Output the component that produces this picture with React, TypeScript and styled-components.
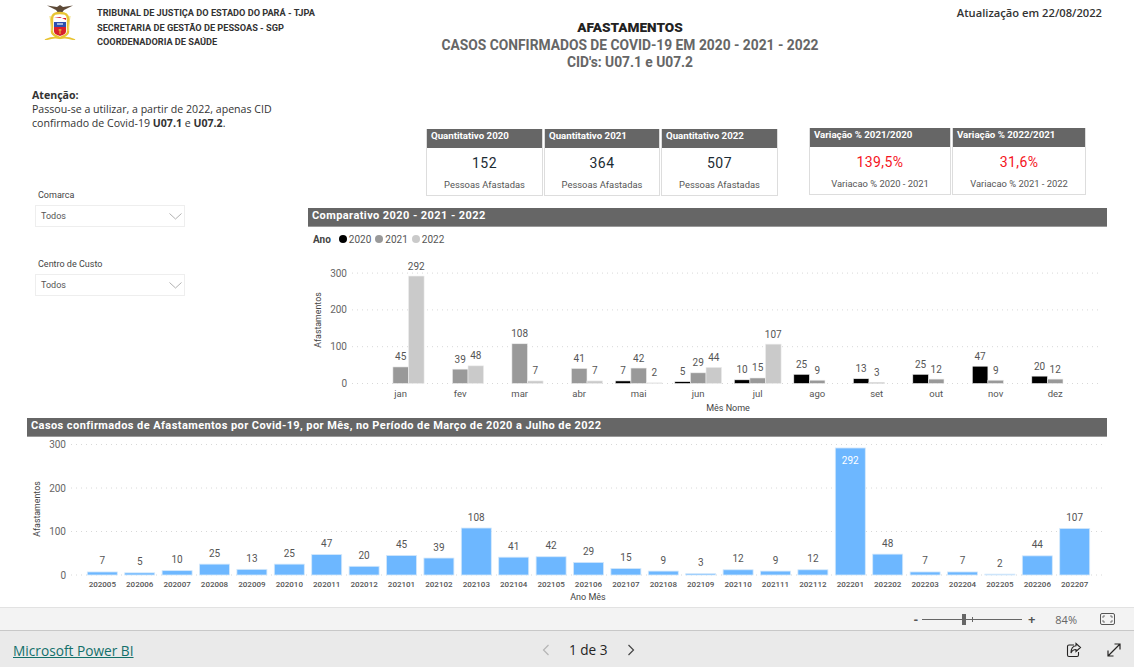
import React from 'react';
import styled, { createGlobalStyle } from 'styled-components';

const GlobalStyle = createGlobalStyle`
  html, body { margin: 0; padding: 0; background: #fff; }
  body { font-family: "Open Sans", "Liberation Sans", sans-serif; overflow: hidden; }
  * { box-sizing: border-box; }
`;

const Page = styled.div`
  width: 1134px;
  height: 667px;
  display: flex;
  flex-direction: column;
`;

const Report = styled.main`
  height: 607px;
  flex: none;
`;

const HeaderRow = styled.header`
  height: 80px;
  display: grid;
  grid-template-columns: 420px 420px 1fr;
`;

const OrgBlock = styled.div`
  display: flex;
  padding: 4px 0 0 44px;
  gap: 21px;
`;

const OrgLines = styled.div`
  padding-top: 2px;
  font: 700 9.2px/14.6px Roboto, "Liberation Sans", sans-serif;
  color: #333;
  white-space: nowrap;
`;

const Titles = styled.div`
  padding-top: 19px;
  text-align: center;
  font: 700 13.8px/17.5px Roboto, "Liberation Sans", sans-serif;
  color: #666;
  b { color: #222; font-size: 13.6px; }
`;

const Updated = styled.div`
  padding: 5px 32px 0 0;
  text-align: right;
  font: 600 11.2px/15px "Open Sans", sans-serif;
  color: #333;
`;

const MiddleRow = styled.section`
  height: 338px;
  display: flex;
`;

const LeftColumn = styled.div`
  width: 308px;
  flex: none;
`;

const Notice = styled.p`
  margin: 0;
  padding: 8px 0 0 32px;
  font: 400 10.6px/14px "Open Sans", sans-serif;
  color: #333;
  b { font-weight: 700; }
`;

const Filter = styled.div`
  margin: 0 0 0 35px;
  width: 150px;
  height: 69px;
  &:first-of-type { margin-top: 58px; }
`;

const FilterLabel = styled.div`
  padding-left: 3px;
  height: 17px;
  font: 400 9px/14px Roboto, "Liberation Sans", sans-serif;
  color: #444;
`;

const Dropdown = styled.div`
  height: 22px;
  border: 1px solid #eee;
  display: flex;
  align-items: center;
  justify-content: space-between;
  padding: 0 0 0 5px;
  font: 400 9px Roboto, "Liberation Sans", sans-serif;
  color: #555;
`;

const RightColumn = styled.div`
  width: 799px;
  flex: none;
`;

const KpiRow = styled.div`
  height: 128px;
  padding: 48px 0 0 118px;
  display: flex;
`;

const KpiGroup = styled.div<{ $shift?: number; $offset?: number }>`
  display: flex;
  gap: 1px;
  margin-left: ${p => p.$shift ?? 0}px;
  margin-top: ${p => p.$offset ?? 0}px;
`;

const Card = styled.div<{ $width: number }>`
  width: ${p => p.$width}px;
  height: 67px;
  border: 1px solid #ddd;
  border-top: none;
  text-align: center;
  background: #fff;
`;

const CardHeader = styled.div`
  height: 19px;
  background: #666;
  color: #fff;
  padding: 0 0 0 4px;
  text-align: left;
  font: 700 9.7px/14px Roboto, "Liberation Sans", sans-serif;
  white-space: nowrap;
`;

const CardValue = styled.div<{ $alert?: boolean }>`
  margin-top: 5px;
  font: 400 14px/20px Roboto, "Liberation Sans", sans-serif;
  letter-spacing: 0.4px;
  color: ${p => (p.$alert ? '#f5141e' : '#1c2b33')};
`;

const CardCaption = styled.div`
  margin-top: 5px;
  font: 400 9.4px/13px Roboto, "Liberation Sans", sans-serif;
  color: #555;
  white-space: nowrap;
`;

const SectionBar = styled.div`
  height: 19px;
  background: #666;
  border-bottom: 1px solid #999;
  color: #fff;
  padding-left: 4px;
  font: 700 11px/15px Roboto, "Liberation Sans", sans-serif;
  letter-spacing: 0.42px;
  white-space: nowrap;
`;

const Legend = styled.div`
  height: 16px;
  margin-top: 4px;
  padding-left: 5px;
  display: flex;
  align-items: center;
  font: 400 10px Roboto, "Liberation Sans", sans-serif;
  color: #555;
  b { color: #444; margin-right: 8px; }
`;

const LegendItem = styled.span<{ $color: string }>`
  display: inline-flex;
  align-items: center;
  margin-right: 4px;
  &::before {
    content: '';
    width: 8px;
    height: 8px;
    margin-right: 2px;
    border-radius: 50%;
    background: ${p => p.$color};
  }
`;

const ChartSvg = styled.svg`
  display: block;
  text {
    font-family: Roboto, "Liberation Sans", sans-serif;
  }
`;

const BottomSection = styled.section`
  margin-left: 27px;
  width: 1080px;
`;

const ZoomBar = styled.div`
  height: 24px;
  flex: none;
  background: #f3f3f3;
  border-top: 1px solid #e2e2e2;
  border-bottom: 1px solid #c8c8c8;
  display: flex;
  align-items: center;
  justify-content: flex-end;
  padding-right: 19px;
  color: #666;
`;

const ZoomSign = styled.span`
  font: 700 13px "Open Sans", sans-serif;
  color: #555;
`;

const ZoomTrack = styled.div`
  position: relative;
  width: 100px;
  height: 1px;
  margin: 0 6px 0 4px;
  background: #666;
`;

const ZoomThumb = styled.div`
  position: absolute;
  left: 40px;
  top: -5px;
  width: 4px;
  height: 11px;
  background: #666;
`;

const ZoomTick = styled.div`
  position: absolute;
  left: 50px;
  top: -2px;
  width: 1px;
  height: 5px;
  background: #666;
`;

const ZoomValue = styled.span`
  margin: 0 23px 0 20px;
  font: 400 11px "Open Sans", sans-serif;
  color: #666;
`;

const Footer = styled.footer`
  flex: 1;
  background: #eaeaea;
  display: grid;
  grid-template-columns: 528px auto 1fr;
  align-items: center;
  padding: 1px 12px 0 13px;
`;

const PowerBiLink = styled.a`
  font: 400 13.7px "Open Sans", sans-serif;
  color: #13706a;
  text-decoration: underline;
  cursor: pointer;
`;

const Pager = styled.nav`
  display: flex;
  align-items: center;
  gap: 18px;
  font: 400 13.6px "Open Sans", sans-serif;
  color: #252423;
`;

const FooterActions = styled.div`
  display: flex;
  justify-content: flex-end;
  gap: 24px;
`;

const logoColors = { gold: '#e8c432', red: '#d8202a', blue: '#2b4fb0', brown: '#5d4a37' };

const Crest = () => (
  <svg width="32" height="36" viewBox="0 0 32 36">
    <path d="M3 1.5 L13 3 L16 1 L19 3 L29 1.5 L20 6 L17 10 L15 10 L12 6 Z" fill={logoColors.brown} />
    <path d="M8 15 C8 9 13 9 16 9 C19 9 24 9 24 15 L24 28 C24 31 20 32 16 34 C12 32 8 31 8 28 Z" fill="none" stroke={logoColors.gold} strokeWidth="2.4" />
    <path d="M10 13 L22 13 L22 20 L10 20 Z" fill="#fff" />
    <path d="M10 14 L22 14 L22 16 L16 13 Z" fill={logoColors.red} />
    <rect x="10" y="18" width="12" height="5" fill={logoColors.blue} />
    <rect x="13" y="19" width="6" height="2" fill="#9fb4d8" />
    <path d="M10 23 L22 23 L22 27 C22 30 19 31 16 32 C13 31 10 30 10 27 Z" fill={logoColors.red} />
    <path d="M16 25 L16 30 M14.5 26 L17.5 26" stroke={logoColors.gold} strokeWidth="1" />
    <path d="M1 36 C6 34 10 33 14 34 L18 34 C22 33 26 34 31 36" fill="none" stroke={logoColors.gold} strokeWidth="1.6" />
    <path d="M6 12 L8 27 M26 12 L24 27" stroke="#efd869" strokeWidth="1" />
  </svg>
);

const Chevron = () => (
  <svg width="16" height="10" viewBox="0 0 16 10">
    <path d="M1.5 2.5 L7.5 8 L13.5 2.5" fill="none" stroke="#a8a8a8" strokeWidth="0.9" />
  </svg>
);

const FitIcon = () => (
  <svg width="15" height="12" viewBox="0 0 15 12" fill="none" stroke="#555">
    <rect x="0.5" y="0.5" width="14" height="11" rx="1.5" />
    <path d="M3 5 V3 H5 M10 3 H12 V5 M12 7 V9 H10 M5 9 H3 V7" strokeWidth="0.8" />
  </svg>
);

const ShareIcon = () => (
  <svg width="16" height="16" viewBox="0 0 16 16" fill="none" stroke="#252423" strokeWidth="1.1">
    <path d="M8 3 H3 C2 3 1.5 3.5 1.5 4.5 V13 C1.5 14 2 14.5 3 14.5 H11 C12 14.5 12.5 14 12.5 13 V10" />
    <path d="M10 1.5 L14.5 5.5 L10 9.5 V7.5 C7.5 7.5 6 8.5 5 11 C5 7 7 4 10 3.7 Z" />
  </svg>
);

const ExpandIcon = () => (
  <svg width="16" height="16" viewBox="0 0 16 16" fill="none" stroke="#252423" strokeWidth="1.2">
    <path d="M2 14 L14 2 M8.5 2 H14 V7.5 M2 8.5 V14 H7.5" />
  </svg>
);

const PagerArrow = ({ dir, muted }: { dir: 'left' | 'right'; muted?: boolean }) => (
  <svg width="10" height="12" viewBox="0 0 10 12" fill="none" stroke={muted ? '#b5b5b5' : '#444'} strokeWidth="1.2">
    <path d={dir === 'left' ? 'M7.5 1 L2.5 6 L7.5 11' : 'M2.5 1 L7.5 6 L2.5 11'} />
  </svg>
);

const Grid = ({ ticks, x1, x2, y0, unit }: { ticks: number[]; x1: number; x2: number; y0: number; unit: number }) => (
  <>
    {ticks.map(t => (
      <g key={t}>
        <line x1={x1} x2={x2} y1={y0 - t * unit} y2={y0 - t * unit} stroke="#d8d8d8" strokeWidth="1" strokeDasharray="1 4" />
        <text x={x1 - 5} y={y0 - t * unit + 3.5} textAnchor="end" fontSize="10" fill="#666">{t}</text>
      </g>
    ))}
  </>
);

const yearColors = ['#000000', '#999999', '#cacaca'];

const months: [string, number | null, number | null, number | null][] = [
  ['jan', null, 45, 292],
  ['fev', null, 39, 48],
  ['mar', null, 108, 7],
  ['abr', null, 41, 7],
  ['mai', 7, 42, 2],
  ['jun', 5, 29, 44],
  ['jul', 10, 15, 107],
  ['ago', 25, 9, null],
  ['set', 13, 3, null],
  ['out', 25, 12, null],
  ['nov', 47, 9, null],
  ['dez', 20, 12, null],
];

// origem do svg: x 308, y 247 na tela
const ComparativoChart = () => {
  const y0 = 136.5;
  const unit = 0.368;
  const step = 59.5;
  const barW = 15.6;
  return (
    <ChartSvg width="799" height="168" viewBox="0 0 799 168">
      <Grid ticks={[0, 100, 200, 300]} x1={44} x2={792} y0={y0} unit={unit} />
      <text transform="translate(13 73) rotate(-90)" textAnchor="middle" fontSize="8.8" fill="#444">Afastamentos</text>
      {months.map(([name, ...vals], i) => {
        const cx = 92.7 + i * step;
        return (
          <g key={name}>
            {vals.map((v, k) => {
              if (v === null) return null;
              const x = cx + (k - 1.5) * barW;
              const h = v * unit;
              return (
                <g key={k}>
                  <rect x={x} y={y0 - h} width={barW} height={h} fill={yearColors[k]} stroke="#eeeeee" strokeWidth="0.6" />
                  <text x={x + barW / 2} y={y0 - h - 6.5} textAnchor="middle" fontSize="10" fill="#555">{v}</text>
                </g>
              );
            })}
            <text x={cx} y={y0 + 13} textAnchor="middle" fontSize="9.5" fill="#555">{name}</text>
          </g>
        );
      })}
      <text x={420} y={164} textAnchor="middle" fontSize="9" fill="#444">Mês Nome</text>
    </ChartSvg>
  );
};

const periods: [string, number][] = [
  ['202005', 7], ['202006', 5], ['202007', 10], ['202008', 25], ['202009', 13], ['202010', 25], ['202011', 47], ['202012', 20],
  ['202101', 45], ['202102', 39], ['202103', 108], ['202104', 41], ['202105', 42], ['202106', 29], ['202107', 15], ['202108', 9],
  ['202109', 3], ['202110', 12], ['202111', 9], ['202112', 12], ['202201', 292], ['202202', 48], ['202203', 7], ['202204', 7],
  ['202205', 2], ['202206', 44], ['202207', 107],
];

// origem do svg: x 27, y 438 na tela
const MensalChart = () => {
  const y0 = 138;
  const unit = 0.435;
  const step = 37.4;
  const barW = 30;
  return (
    <ChartSvg width="1080" height="168" viewBox="0 0 1080 168">
      <Grid ticks={[0, 100, 200, 300]} x1={44} x2={1078} y0={y0} unit={unit} />
      <text transform="translate(13 72) rotate(-90)" textAnchor="middle" fontSize="8.8" fill="#444">Afastamentos</text>
      {periods.map(([name, v], i) => {
        const cx = 75.3 + i * step;
        const h = v * unit;
        // o maior valor não cabe acima da barra: o rótulo vai para dentro
        const inside = v > 250;
        return (
          <g key={name}>
            <rect x={cx - barW / 2} y={y0 - h} width={barW} height={h} fill="#6db7ff" stroke="#d4e8fb" strokeWidth="0.8" />
            <text
              x={cx}
              y={inside ? y0 - h + 16 : y0 - h - 7.5}
              textAnchor="middle"
              fontSize="10"
              fill={inside ? '#fff' : '#555'}
            >
              {v}
            </text>
            <text x={cx} y={y0 + 12} textAnchor="middle" fontSize="8" fontWeight="500" fill="#555">{name}</text>
          </g>
        );
      })}
      <text x={561} y={163} textAnchor="middle" fontSize="9" fill="#444">Ano Mês</text>
    </ChartSvg>
  );
};

const quantities = [
  { title: 'Quantitativo 2020', value: '152', width: 117 },
  { title: 'Quantitativo 2021', value: '364', width: 116 },
  { title: 'Quantitativo 2022', value: '507', width: 117 },
];

const variations = [
  { title: 'Variação % 2021/2020', value: '139,5%', caption: 'Variacao % 2020 - 2021', width: 142 },
  { title: 'Variação % 2022/2021', value: '31,6%', caption: 'Variacao % 2021 - 2022', width: 134 },
];

export default function App() {
  return (
    <Page>
      <GlobalStyle />
      <Report>
        <HeaderRow>
          <OrgBlock>
            <Crest />
            <OrgLines>
              TRIBUNAL DE JUSTIÇA DO ESTADO DO PARÁ - TJPA<br />
              SECRETARIA DE GESTÃO DE PESSOAS - SGP<br />
              COORDENADORIA DE SAÚDE
            </OrgLines>
          </OrgBlock>
          <Titles>
            <b>AFASTAMENTOS</b><br />
            CASOS CONFIRMADOS DE COVID-19 EM 2020 - 2021 - 2022<br />
            CID's: U07.1 e U07.2
          </Titles>
          <Updated>Atualização em 22/08/2022</Updated>
        </HeaderRow>
        <MiddleRow>
          <LeftColumn>
            <Notice>
              <b>Atenção:</b><br />
              Passou-se a utilizar, a partir de 2022, apenas CID<br />
              confirmado de Covid-19 <b>U07.1</b> e <b>U07.2</b>.
            </Notice>
            <Filter>
              <FilterLabel>Comarca</FilterLabel>
              <Dropdown>Todos<Chevron /></Dropdown>
            </Filter>
            <Filter>
              <FilterLabel>Centro de Custo</FilterLabel>
              <Dropdown>Todos<Chevron /></Dropdown>
            </Filter>
          </LeftColumn>
          <RightColumn>
            <KpiRow>
              <KpiGroup $offset={1}>
                {quantities.map(q => (
                  <Card key={q.title} $width={q.width}>
                    <CardHeader>{q.title}</CardHeader>
                    <CardValue>{q.value}</CardValue>
                    <CardCaption>Pessoas Afastadas</CardCaption>
                  </Card>
                ))}
              </KpiGroup>
              <KpiGroup $shift={31}>
                {variations.map(v => (
                  <Card key={v.title} $width={v.width}>
                    <CardHeader>{v.title}</CardHeader>
                    <CardValue $alert>{v.value}</CardValue>
                    <CardCaption>{v.caption}</CardCaption>
                  </Card>
                ))}
              </KpiGroup>
            </KpiRow>
            <SectionBar>Comparativo 2020 - 2021 - 2022</SectionBar>
            <Legend>
              <b>Ano</b>
              <LegendItem $color={yearColors[0]}>2020</LegendItem>
              <LegendItem $color={yearColors[1]}>2021</LegendItem>
              <LegendItem $color={yearColors[2]}>2022</LegendItem>
            </Legend>
            <ComparativoChart />
          </RightColumn>
        </MiddleRow>
        <BottomSection>
          <SectionBar>Casos confirmados de Afastamentos por Covid-19, por Mês, no Período de Março de 2020 a Julho de 2022</SectionBar>
          <MensalChart />
        </BottomSection>
      </Report>
      <ZoomBar>
        <ZoomSign>-</ZoomSign>
        <ZoomTrack>
          <ZoomThumb />
          <ZoomTick />
        </ZoomTrack>
        <ZoomSign>+</ZoomSign>
        <ZoomValue>84%</ZoomValue>
        <FitIcon />
      </ZoomBar>
      <Footer>
        <div><PowerBiLink>Microsoft Power BI</PowerBiLink></div>
        <Pager>
          <PagerArrow dir="left" muted />
          <span>1 de 3</span>
          <PagerArrow dir="right" />
        </Pager>
        <FooterActions>
          <ShareIcon />
          <ExpandIcon />
        </FooterActions>
      </Footer>
    </Page>
  );
}
